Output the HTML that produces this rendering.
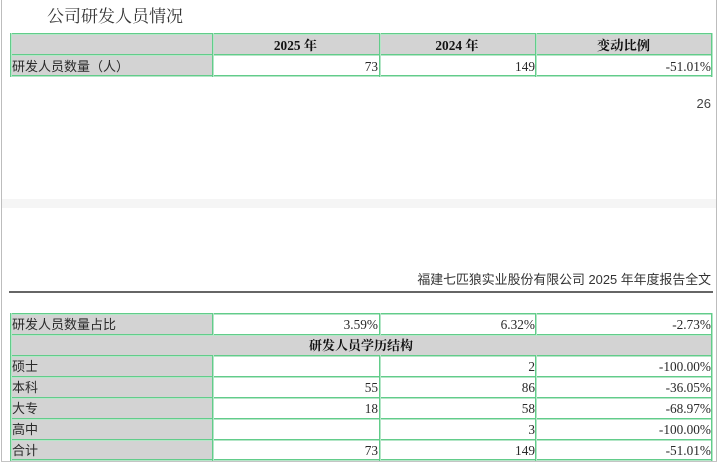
<!DOCTYPE html>
<html lang="zh">
<head>
<meta charset="utf-8">
<style>
html,body{margin:0;padding:0;background:#fff;}
body{width:719px;height:463px;overflow:hidden;position:relative;}
#p{position:absolute;left:0;top:0;width:719px;height:463px;filter:blur(0.35px);font-family:"Liberation Serif","Noto Serif CJK SC",serif;color:#2a2a2a;font-size:13.3px;}
.a{position:absolute;}
.t{position:absolute;white-space:nowrap;line-height:20px;height:20px;}
.l{font-size:13px;font-family:"Liberation Serif","WenQuanYi Zen Hei",serif;}
.r{text-align:right;}
.c{text-align:center;font-weight:bold;color:#111;}
.s{font-family:"Liberation Sans","WenQuanYi Zen Hei","Noto Sans CJK SC",sans-serif;color:#333;}
.g{position:absolute;background:#d3d3d3;}
.v{position:absolute;width:1px;background:#62cc8a;box-shadow:1px 0 0 #b4e6c7;}
.h{position:absolute;height:1px;background:#62cc8a;box-shadow:0 1px 0 #b4e6c7;}
</style>
</head>
<body>
<div id="p">
<div class="a" style="left:1px;top:0;width:1px;height:461px;background:#bdbdbd"></div>
<div class="a" style="left:716px;top:0;width:1px;height:461px;background:#bdbdbd"></div>
<div class="a" style="left:1px;top:461px;width:716px;height:1px;background:#c4c4c4"></div>
<div class="a" style="left:2px;top:199px;width:714px;height:9px;background:#f5f5f5"></div>

<div class="t" style="left:47px;top:7px;font-size:17px;color:#333;">公司研发人员情况</div>

<div class="g" style="left:10px;top:33px;width:702px;height:21px"></div>
<div class="g" style="left:10px;top:54px;width:202px;height:21px"></div>
<div class="h" style="left:10px;top:33px;width:702px"></div>
<div class="h" style="left:10px;top:54px;width:702px"></div>
<div class="h" style="left:10px;top:75px;width:702px"></div>
<div class="v" style="left:10px;top:33px;height:44px"></div>
<div class="v" style="left:212px;top:33px;height:44px"></div>
<div class="v" style="left:379px;top:33px;height:44px"></div>
<div class="v" style="left:535px;top:33px;height:44px"></div>
<div class="v" style="left:711px;top:33px;height:44px"></div>

<div class="t c" style="left:213px;width:165px;top:36px;">2025 年</div>
<div class="t c" style="left:379px;width:156px;top:36px;">2024 年</div>
<div class="t c" style="left:536px;width:175px;top:36px;">变动比例</div>
<div class="t l" style="left:12px;top:57px;">研发人员数量（人）</div>
<div class="t r" style="left:213px;width:165px;top:57px;">73</div>
<div class="t r" style="left:379px;width:156px;top:57px;">149</div>
<div class="t r" style="left:536px;width:175px;top:57px;">-51.01%</div>

<div class="t r s" style="left:650px;width:61px;top:94px;color:#444;font-size:13px;">26</div>

<div class="t r s" style="left:300px;width:411px;top:270px;font-size:12.9px;">福建七匹狼实业股份有限公司 2025 年年度报告全文</div>
<div class="a" style="left:9px;top:291px;width:704px;height:2px;background:#666"></div>

<div class="g" style="left:10px;top:313px;width:202px;height:147px"></div>
<div class="g" style="left:10px;top:334px;width:702px;height:21px"></div>
<div class="h" style="left:10px;top:313px;width:702px"></div>
<div class="h" style="left:10px;top:334px;width:702px"></div>
<div class="h" style="left:10px;top:355px;width:702px"></div>
<div class="h" style="left:10px;top:376px;width:702px"></div>
<div class="h" style="left:10px;top:397px;width:702px"></div>
<div class="h" style="left:10px;top:418px;width:702px"></div>
<div class="h" style="left:10px;top:439px;width:702px"></div>
<div class="h" style="left:10px;top:459px;width:702px"></div>
<div class="v" style="left:10px;top:313px;height:148px"></div>
<div class="v" style="left:711px;top:313px;height:148px"></div>
<div class="v" style="left:212px;top:313px;height:22px"></div>
<div class="v" style="left:379px;top:313px;height:22px"></div>
<div class="v" style="left:535px;top:313px;height:22px"></div>
<div class="v" style="left:212px;top:355px;height:106px"></div>
<div class="v" style="left:379px;top:355px;height:106px"></div>
<div class="v" style="left:535px;top:355px;height:106px"></div>

<div class="t l" style="left:12px;top:315px;">研发人员数量占比</div>
<div class="t r" style="left:213px;width:165px;top:315px;">3.59%</div>
<div class="t r" style="left:379px;width:156px;top:315px;">6.32%</div>
<div class="t r" style="left:536px;width:175px;top:315px;">-2.73%</div>

<div class="t c" style="left:11px;width:700px;top:336px;font-size:13px;">研发人员学历结构</div>

<div class="t l" style="left:12px;top:357px;">硕士</div>
<div class="t r" style="left:379px;width:156px;top:357px;">2</div>
<div class="t r" style="left:536px;width:175px;top:357px;">-100.00%</div>

<div class="t l" style="left:12px;top:378px;">本科</div>
<div class="t r" style="left:213px;width:165px;top:378px;">55</div>
<div class="t r" style="left:379px;width:156px;top:378px;">86</div>
<div class="t r" style="left:536px;width:175px;top:378px;">-36.05%</div>

<div class="t l" style="left:12px;top:399px;">大专</div>
<div class="t r" style="left:213px;width:165px;top:399px;">18</div>
<div class="t r" style="left:379px;width:156px;top:399px;">58</div>
<div class="t r" style="left:536px;width:175px;top:399px;">-68.97%</div>

<div class="t l" style="left:12px;top:420px;">高中</div>
<div class="t r" style="left:379px;width:156px;top:420px;">3</div>
<div class="t r" style="left:536px;width:175px;top:420px;">-100.00%</div>

<div class="t l" style="left:12px;top:441px;">合计</div>
<div class="t r" style="left:213px;width:165px;top:441px;">73</div>
<div class="t r" style="left:379px;width:156px;top:441px;">149</div>
<div class="t r" style="left:536px;width:175px;top:441px;">-51.01%</div>
</div>
</body>
</html>
